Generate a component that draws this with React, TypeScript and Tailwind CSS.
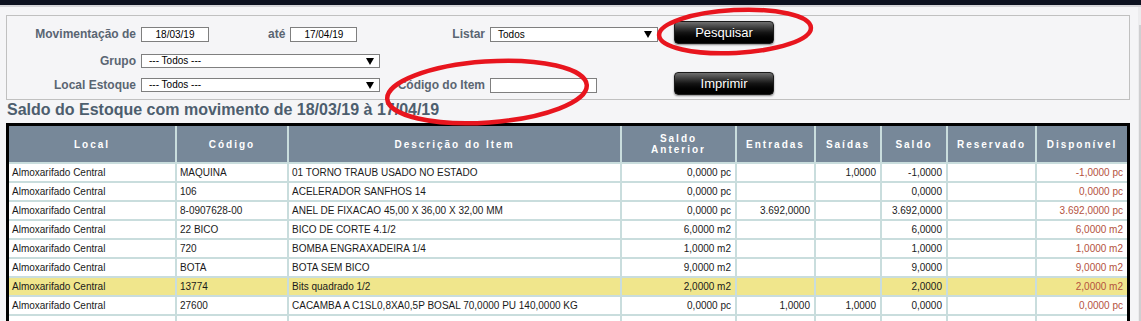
import React from "react";

type Row = {
  local: string;
  codigo: string;
  desc: string;
  saldoAnt: string;
  entradas: string;
  saidas: string;
  saldo: string;
  reservado: string;
  disp: string;
  hl?: boolean;
};

const rows: Row[] = [
  { local: "Almoxarifado Central", codigo: "MAQUINA", desc: "01 TORNO TRAUB USADO NO ESTADO", saldoAnt: "0,0000 pc", entradas: "", saidas: "1,0000", saldo: "-1,0000", reservado: "", disp: "-1,0000 pc" },
  { local: "Almoxarifado Central", codigo: "106", desc: "ACELERADOR SANFHOS 14", saldoAnt: "0,0000 pc", entradas: "", saidas: "", saldo: "0,0000", reservado: "", disp: "0,0000 pc" },
  { local: "Almoxarifado Central", codigo: "8-0907628-00", desc: "ANEL DE FIXACAO 45,00 X 36,00 X 32,00 MM", saldoAnt: "0,0000 pc", entradas: "3.692,0000", saidas: "", saldo: "3.692,0000", reservado: "", disp: "3.692,0000 pc" },
  { local: "Almoxarifado Central", codigo: "22 BICO", desc: "BICO DE CORTE 4.1/2", saldoAnt: "6,0000 m2", entradas: "", saidas: "", saldo: "6,0000", reservado: "", disp: "6,0000 m2" },
  { local: "Almoxarifado Central", codigo: "720", desc: "BOMBA ENGRAXADEIRA 1/4", saldoAnt: "1,0000 m2", entradas: "", saidas: "", saldo: "1,0000", reservado: "", disp: "1,0000 m2" },
  { local: "Almoxarifado Central", codigo: "BOTA", desc: "BOTA SEM BICO", saldoAnt: "9,0000 m2", entradas: "", saidas: "", saldo: "9,0000", reservado: "", disp: "9,0000 m2" },
  { local: "Almoxarifado Central", codigo: "13774", desc: "Bits quadrado 1/2", saldoAnt: "2,0000 m2", entradas: "", saidas: "", saldo: "2,0000", reservado: "", disp: "2,0000 m2", hl: true },
  { local: "Almoxarifado Central", codigo: "27600", desc: "CACAMBA A C1SL0,8XA0,5P BOSAL 70,0000 PU 140,0000 KG", saldoAnt: "0,0000 pc", entradas: "1,0000", saidas: "1,0000", saldo: "0,0000", reservado: "", disp: "0,0000 pc" },
  { local: "", codigo: "", desc: "", saldoAnt: "", entradas: "", saidas: "", saldo: "", reservado: "", disp: "" },
];

function Arrow() {
  return (
    <svg width="8" height="7" viewBox="0 0 8 7" className="shrink-0">
      <polygon points="0,0 8,0 4,7" fill="#000" />
    </svg>
  );
}

function Select({ w, h, text }: { w: string; h: string; text: string }) {
  return (
    <div
      className={`${w} ${h} flex items-center justify-between border border-[#7f7f7f] bg-white pl-[7px] pr-[5px] text-[10px] text-black`}
    >
      <span className="leading-none">{text}</span>
      <Arrow />
    </div>
  );
}

function Btn({ label }: { label: string }) {
  return (
    <div className="flex h-[23px] w-[100px] items-center justify-center rounded-[4px] border border-[#1b1b1b] bg-gradient-to-b from-[#707070] via-[#151515] to-[#000] text-[13px] leading-none text-white shadow-[0_1px_2px_rgba(0,0,0,0.45)] [text-shadow:0_1px_1px_#000]">
      {label}
    </div>
  );
}

const label = "text-[12px] font-bold leading-[15px] text-[#5a6572]";

export default function App() {
  const cell = "h-[17px] overflow-hidden whitespace-nowrap text-[10px] leading-[17px] text-[#1a1a1a]";
  return (
    <div className="relative h-[321px] w-[1141px] overflow-hidden bg-[#f5f5f7] font-['Liberation_Sans',Arial,sans-serif]">
      <div className="h-[5px] bg-[#0d1120]" />
      <div className="h-[2px] bg-[#d5d5d9]" />
      <div className="flex">
        <main className="w-[1138px] pl-[6px]">
          {/* Filter box */}
          <div className="mt-[8px] w-[1124px] border border-[#c0c0c0] pb-[4px] pt-[5px]">
            {/* Row 1 */}
            <div className="flex h-[23px] items-start">
              <div className={`mt-[6px] w-[129px] text-right ${label}`}>Movimentação de</div>
              <div className="ml-[5px] mt-[6px] flex h-[15px] w-[68px] items-center justify-center border border-[#7f7f7f] bg-white text-[10px] leading-none text-black">
                18/03/19
              </div>
              <div className={`ml-[59px] mt-[6px] ${label}`}>até</div>
              <div className="ml-[5px] mt-[6px] flex h-[15px] w-[67px] items-center justify-center border border-[#7f7f7f] bg-white text-[10px] leading-none text-black">
                17/04/19
              </div>
              <div className={`ml-[95px] mt-[6px] ${label}`}>Listar</div>
              <div className="ml-[5px] mt-[6px]">
                <Select w="w-[168px]" h="h-[15px]" text="Todos" />
              </div>
              <div className="ml-[16px]">
                <Btn label="Pesquisar" />
              </div>
            </div>
            {/* Row 2 */}
            <div className="mt-[10px] flex h-[14px] items-center">
              <div className={`w-[129px] text-right ${label}`}>Grupo</div>
              <div className="ml-[5px]">
                <Select w="w-[239px]" h="h-[14px]" text="--- Todos ---" />
              </div>
            </div>
            {/* Row 3 */}
            <div className="mt-[4px] flex h-[23px] items-start">
              <div className={`mt-[6px] w-[129px] text-right ${label}`}>Local Estoque</div>
              <div className="ml-[5px] mt-[6px]">
                <Select w="w-[239px]" h="h-[14px]" text="--- Todos ---" />
              </div>
              <div className={`mt-[6px] w-[105px] text-right ${label}`}>Código do Item</div>
              <div className="ml-[5px] mt-[6px] h-[15px] w-[107px] border border-[#7f7f7f] bg-white" />
              <div className="ml-[77px]">
                <Btn label="Imprimir" />
              </div>
            </div>
          </div>

          {/* Title */}
          <h1 className="ml-[1px] h-[20px] text-[16px] font-bold leading-[20px] text-[#4d5e6e]">
            Saldo do Estoque com movimento de 18/03/19 à 17/04/19
          </h1>

          {/* Table */}
          <div className="mt-[3px] w-[1124px] border-[3px] border-black bg-[#c9dddd]">
            <div className="grid grid-cols-[166px_110px_331px_113px_77px_64px_64px_87px_90px] gap-[2px]">
              {["Local", "Código", "Descrição do Item", "Saldo Anterior", "Entradas", "Saídas", "Saldo", "Reservado", "Disponível"].map((h) => (
                <div
                  key={h}
                  className="flex h-[36px] items-center justify-center bg-[#778899] px-[2px] text-center text-[10px] font-bold leading-[11px] tracking-[2px] text-white"
                >
                  {h === "Saldo Anterior" ? (
                    <span>
                      Saldo
                      <br />
                      Anterior
                    </span>
                  ) : (
                    h
                  )}
                </div>
              ))}
              {rows.map((r, i) => {
                const bg = r.hl ? "bg-[#f0e68c]" : "bg-white";
                return (
                  <React.Fragment key={i}>
                    <div className={`${cell} ${bg} pl-[3px]`}>{r.local}</div>
                    <div className={`${cell} ${bg} pl-[3px]`}>{r.codigo}</div>
                    <div className={`${cell} ${bg} pl-[3px]`}>{r.desc}</div>
                    <div className={`${cell} ${bg} pr-[4px] text-right`}>{r.saldoAnt}</div>
                    <div className={`${cell} ${bg} pr-[4px] text-right`}>{r.entradas}</div>
                    <div className={`${cell} ${bg} pr-[4px] text-right`}>{r.saidas}</div>
                    <div className={`${cell} ${bg} pr-[4px] text-right`}>{r.saldo}</div>
                    <div className={`${cell} ${bg} pr-[4px] text-right`}>{r.reservado}</div>
                    <div className={`${cell} ${bg} pr-[4px] text-right !text-[#b4523e]`}>{r.disp}</div>
                  </React.Fragment>
                );
              })}
            </div>
          </div>
        </main>
        <div className="flex h-[314px] w-[3px] flex-col bg-[#ececee]">
          <div className="ml-auto mt-[18px] h-full w-[2px] bg-[#cfcfd1]" />
        </div>
      </div>

      {/* Red annotation ellipses */}
      <svg
        className="pointer-events-none absolute left-0 top-0"
        width="1141"
        height="321"
        viewBox="0 0 1141 321"
      >
        <ellipse cx="735" cy="31.5" rx="76" ry="21.5" transform="rotate(-3 735 31.5)" fill="none" stroke="#e8151e" strokeWidth="4.5" />
        <ellipse cx="487" cy="92" rx="100" ry="30.5" transform="rotate(-4 487 92)" fill="none" stroke="#e8151e" strokeWidth="4.5" />
      </svg>
    </div>
  );
}
